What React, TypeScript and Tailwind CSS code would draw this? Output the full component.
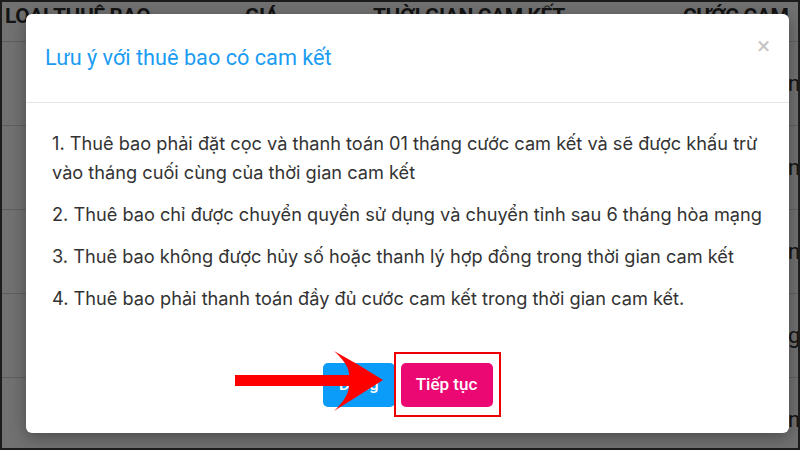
const rows = ['n', 'n', 'n', 'g', 'n'];

const rules = [
  '1. Thuê bao phải đặt cọc và thanh toán 01 tháng cước cam kết và sẽ được khấu trừ vào tháng cuối cùng của thời gian cam kết',
  '2. Thuê bao chỉ được chuyển quyền sử dụng và chuyển tỉnh sau 6 tháng hòa mạng',
  '3. Thuê bao không được hủy số hoặc thanh lý hợp đồng trong thời gian cam kết',
  '4. Thuê bao phải thanh toán đầy đủ cước cam kết trong thời gian cam kết.',
];

export default function App() {
  return (
    <div className="relative h-[450px] w-[800px] overflow-hidden border-2 border-[#1c1c1c] bg-[#717171] font-['Roboto',sans-serif]">
      {/* table behind the overlay */}
      <div className="flex h-[40px] border-b border-[#5f5f5f] pl-[3px] pt-[1px] text-[21px] leading-[26px] font-bold tracking-[-0.4px] text-[#141414]">
        <div className="w-[240px] shrink-0">LOẠI THUÊ BAO</div>
        <div className="w-[128px] shrink-0">GIÁ</div>
        <div className="w-[310px] shrink-0">THỜI GIAN CAM KẾT</div>
        <div className="shrink-0 whitespace-nowrap">CƯỚC CAM</div>
      </div>
      {rows.map((r, i) => (
        <div key={i} className="flex h-[84px] items-center border-b border-[#5f5f5f] pl-[786px] text-[22px] text-[#141414]">
          <span>{r}</span>
        </div>
      ))}

      {/* modal */}
      <div className="absolute left-[24px] top-[12px] flex h-[419px] w-[763px] flex-col rounded-[6px] bg-white shadow-[0_4px_16px_rgba(0,0,0,0.35)]">
        <div className="relative flex h-[89px] shrink-0 items-center border-b border-[#e5e5e5] px-[19px]">
          <h3 className="text-[21.7px] text-[#1b9cf2]">Lưu ý với thuê bao có cam kết</h3>
          <button className="absolute right-[19px] top-[20px] text-[24px] leading-none text-[#c4c4c4]">×</button>
        </div>
        <div className="px-[26px] pt-[26px] font-['Inter',sans-serif] text-[18.2px] leading-[29px] text-[#333]">
          {rules.map((t, i) => (
            <p key={i} className="mb-[13px]">{t}</p>
          ))}
        </div>
        <div className="mt-auto flex justify-center gap-[6px] pb-[26px]">
          <button className="h-[44px] w-[72px] rounded-[5px] bg-[#0a9cf8] text-[17px] font-medium text-white">Đóng</button>
          <button className="h-[44px] w-[92px] rounded-[5px] bg-[#eb0873] text-[17px] font-medium text-white">Tiếp tục</button>
        </div>
      </div>

      {/* highlight + arrow */}
      <div className="absolute left-[392px] top-[350px] h-[65px] w-[107px] border-2 border-[#ee0000]" />
      <svg className="pointer-events-none absolute left-[-2px] top-[-2px]" width="800" height="450" viewBox="0 0 800 450">
        <rect x="235" y="375" width="115" height="11" fill="#ff0000" />
        <path d="M383 380 Q358 364 334 351 Q353 368 348 380 Q353 393 334 411 Q358 396 383 380 Z" fill="#ff0000" />
      </svg>
    </div>
  );
}
